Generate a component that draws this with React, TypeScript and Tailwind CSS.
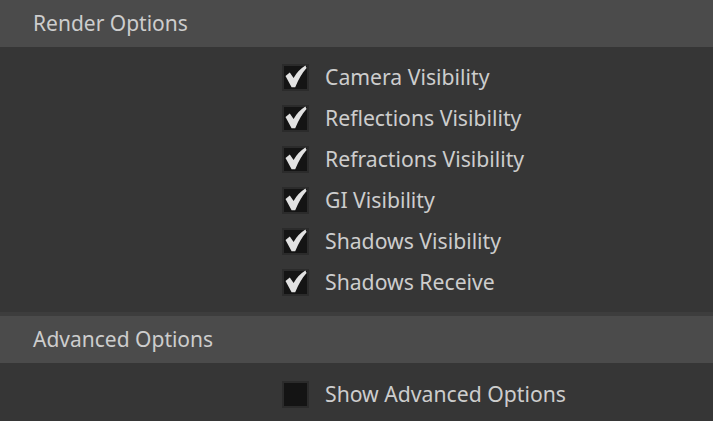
import React from "react";

type CheckProps = {
  label: string;
  checked: boolean;
};

function CheckRow({ label, checked }: CheckProps) {
  return (
    <div className="flex items-center h-[27px]">
      <div className="w-[27px] h-[27px] bg-[#141414] border-2 border-[#2b2b2b] flex items-center justify-center">
        {checked && (
          <svg width="27" height="27" viewBox="0 0 27 27" className="shrink-0">
            <path
              d="M3.5 12 L7.8 8.6 L11.6 14 Q16 6.2 23.4 1.6 L24.6 4 Q18.2 11 13.2 23.2 L9.6 23.2 Z"
              fill="#e2e2e2"
            />
          </svg>
        )}
      </div>
      <span className="ml-4 mb-[2px] text-[21.2px] text-[#cdcdcd] leading-none">{label}</span>
    </div>
  );
}

function Header({ title }: { title: string }) {
  return (
    <div className="h-[47px] bg-[#4b4b4b] flex items-center pl-[33px]">
      <span className="text-[21px] text-[#cdcdcd] leading-none">{title}</span>
    </div>
  );
}

const renderOptions = [
  "Camera Visibility",
  "Reflections Visibility",
  "Refractions Visibility",
  "GI Visibility",
  "Shadows Visibility",
  "Shadows Receive",
];

export default function App() {
  return (
    <div
      className="w-[713px] h-[421px] overflow-hidden bg-[#363636]"
      style={{ fontFamily: '"Noto Sans", "Open Sans", sans-serif' }}
    >
      <Header title="Render Options" />
      <div className="pt-[17px] pb-[16px] pl-[282px] flex flex-col gap-[14px]">
        {renderOptions.map(o => (
          <CheckRow key={o} label={o} checked={true} />
        ))}
      </div>
      <div className="h-[4px] bg-[#3d3d3d]" />
      <Header title="Advanced Options" />
      <div className="pt-[18px] pl-[282px]">
        <CheckRow label="Show Advanced Options" checked={false} />
      </div>
    </div>
  );
}
